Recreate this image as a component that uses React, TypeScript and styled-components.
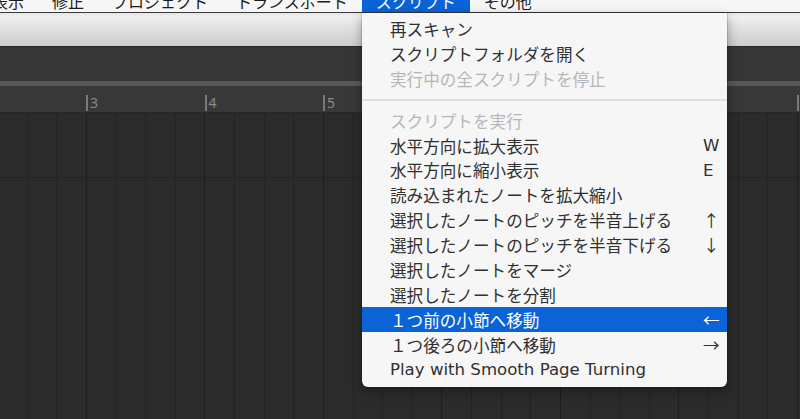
import React from "react";
import styled, { createGlobalStyle } from "styled-components";

const Global = createGlobalStyle`
  html, body { margin: 0; padding: 0; background: #2b2b2b; }
  body { font-family: "DejaVu Sans", "Noto Sans CJK JP", sans-serif; }
  #root { width: 800px; height: 419px; }
`;

const Screen = styled.div`
  position: relative;
  width: 800px;
  height: 419px;
  overflow: hidden;
  display: flex;
  flex-direction: column;
  background: #2b2b2b;
`;

const MenuBar = styled.div`
  height: 12px;
  flex: none;
  background: #f6f6f6;
  border-bottom: 1px solid #3a3a3a;
  overflow: hidden;
  display: flex;
  margin-left: -22px;
`;

const BarItem = styled.div<{ $active?: boolean }>`
  height: 22px;
  margin-top: -8px;
  line-height: 22px;
  padding: 0 14px;
  font-size: 16px;
  color: ${(p) => (p.$active ? "#ffffff" : "#1c1c1c")};
  background: ${(p) => (p.$active ? "#0a64d8" : "transparent")};
  white-space: nowrap;
`;

const Toolbar = styled.div`
  height: 33px;
  flex: none;
  background: linear-gradient(to bottom, #e6e6e6 0px, #f0f0f0 4px, #e2e2e2 14px, #cdcdcd 32px);
  border-bottom: 1px solid #2a2a2a;
`;

const DarkPanel = styled.div`
  height: 34px;
  flex: none;
  background: #363636;
`;

const Strip = styled.div`
  height: 5px;
  flex: none;
  background: #585858;
`;

const Ruler = styled.div`
  height: 26px;
  flex: none;
  background: #383838;
  border-bottom: 1px solid #262626;
  display: flex;
  overflow: hidden;
`;

const RulerInner = styled.div`
  display: flex;
  margin-left: -32.5px;
`;

const BarCell = styled.div`
  width: 118.5px;
  flex: none;
  display: flex;
  align-items: flex-end;
  height: 26px;
`;

const Tick = styled.div`
  width: 2px;
  height: 16px;
  margin-bottom: 1px;
  background: #7a7a7a;
`;

const BarLabel = styled.span`
  font-family: "Noto Sans", sans-serif;
  font-size: 14px;
  line-height: 16px;
  height: 16px;
  color: #8a8a8a;
  padding-left: 2px;
  margin-bottom: 1px;
`;

const Grid = styled.div`
  flex: 1;
  background-color: #2b2b2b;
  background-image:
    repeating-linear-gradient(to right, #1e1e1e 0px, #1e1e1e 1px, transparent 1px, transparent 118.5px),
    repeating-linear-gradient(to right, #242424 0px, #242424 1px, transparent 1px, transparent 29.625px);
  background-position: 86px 0, 86px 0;
  display: flex;
  flex-direction: column;
`;

const TrackRow = styled.div`
  height: 64px;
  border-bottom: 1px solid #232323;
`;

const Dropdown = styled.div`
  position: absolute;
  left: 362px;
  top: 13px;
  width: 365px;
  background: #f6f6f6;
  border-radius: 0 0 6px 6px;
  box-shadow: 0 0 0 0.5px rgba(0, 0, 0, 0.25), 0 4px 12px rgba(0, 0, 0, 0.35);
  padding: 3.5px 0 5.5px;
  display: flex;
  flex-direction: column;
`;

const Item = styled.div<{ $disabled?: boolean; $selected?: boolean }>`
  height: 24.9px;
  display: flex;
  align-items: center;
  padding-left: 28px;
  font-size: 16.6px;
  white-space: nowrap;
  color: ${(p) => (p.$selected ? "#ffffff" : p.$disabled ? "#b6b6b6" : "#303030")};
  background: ${(p) => (p.$selected ? "#0a64d8" : "transparent")};
`;

const ItemLabel = styled.span`
  flex: 1;
`;

const Shortcut = styled.span<{ $arrow?: boolean }>`
  width: 24px;
  flex: none;
  font-size: 16.6px;
  font-family: ${(p) => (p.$arrow ? '"Noto Sans CJK JP", sans-serif' : '"DejaVu Sans", sans-serif')};
`;

const Separator = styled.div`
  height: 17px;
  display: flex;
  align-items: center;
  &::after {
    content: "";
    display: block;
    width: 100%;
    height: 2px;
    background: #dfdfdf;
  }
`;

type Entry =
  | { kind: "item"; label: string; shortcut?: string; disabled?: boolean; selected?: boolean }
  | { kind: "sep" };

const entries: Entry[] = [
  { kind: "item", label: "再スキャン" },
  { kind: "item", label: "スクリプトフォルダを開く" },
  { kind: "item", label: "実行中の全スクリプトを停止", disabled: true },
  { kind: "sep" },
  { kind: "item", label: "スクリプトを実行", disabled: true },
  { kind: "item", label: "水平方向に拡大表示", shortcut: "W" },
  { kind: "item", label: "水平方向に縮小表示", shortcut: "E" },
  { kind: "item", label: "読み込まれたノートを拡大縮小" },
  { kind: "item", label: "選択したノートのピッチを半音上げる", shortcut: "↑" },
  { kind: "item", label: "選択したノートのピッチを半音下げる", shortcut: "↓" },
  { kind: "item", label: "選択したノートをマージ" },
  { kind: "item", label: "選択したノートを分割" },
  { kind: "item", label: "１つ前の小節へ移動", shortcut: "←", selected: true },
  { kind: "item", label: "１つ後ろの小節へ移動", shortcut: "→" },
  { kind: "item", label: "Play with Smooth Page Turning" },
];

const menus = ["表示", "修正", "プロジェクト", "トランスポート", "スクリプト", "その他"];
const bars = [2, 3, 4, 5, 6, 7, 8, 9];

export default function App() {
  return (
    <>
      <Global />
      <Screen>
        <MenuBar>
          {menus.map((m) => (
            <BarItem key={m} $active={m === "スクリプト"}>
              {m}
            </BarItem>
          ))}
        </MenuBar>
        <Toolbar />
        <DarkPanel />
        <Strip />
        <Ruler>
          <RulerInner>
            {bars.map((b) => (
              <BarCell key={b}>
                <Tick />
                <BarLabel>{b}</BarLabel>
              </BarCell>
            ))}
          </RulerInner>
        </Ruler>
        <Grid>
          <TrackRow />
        </Grid>
        <Dropdown>
          {entries.map((e, i) =>
            e.kind === "sep" ? (
              <Separator key={i} />
            ) : (
              <Item key={i} $disabled={e.disabled} $selected={e.selected}>
                <ItemLabel>{e.label}</ItemLabel>
                {e.shortcut && (
                  <Shortcut $arrow={!/^[A-Z]$/.test(e.shortcut)}>{e.shortcut}</Shortcut>
                )}
              </Item>
            )
          )}
        </Dropdown>
      </Screen>
    </>
  );
}
